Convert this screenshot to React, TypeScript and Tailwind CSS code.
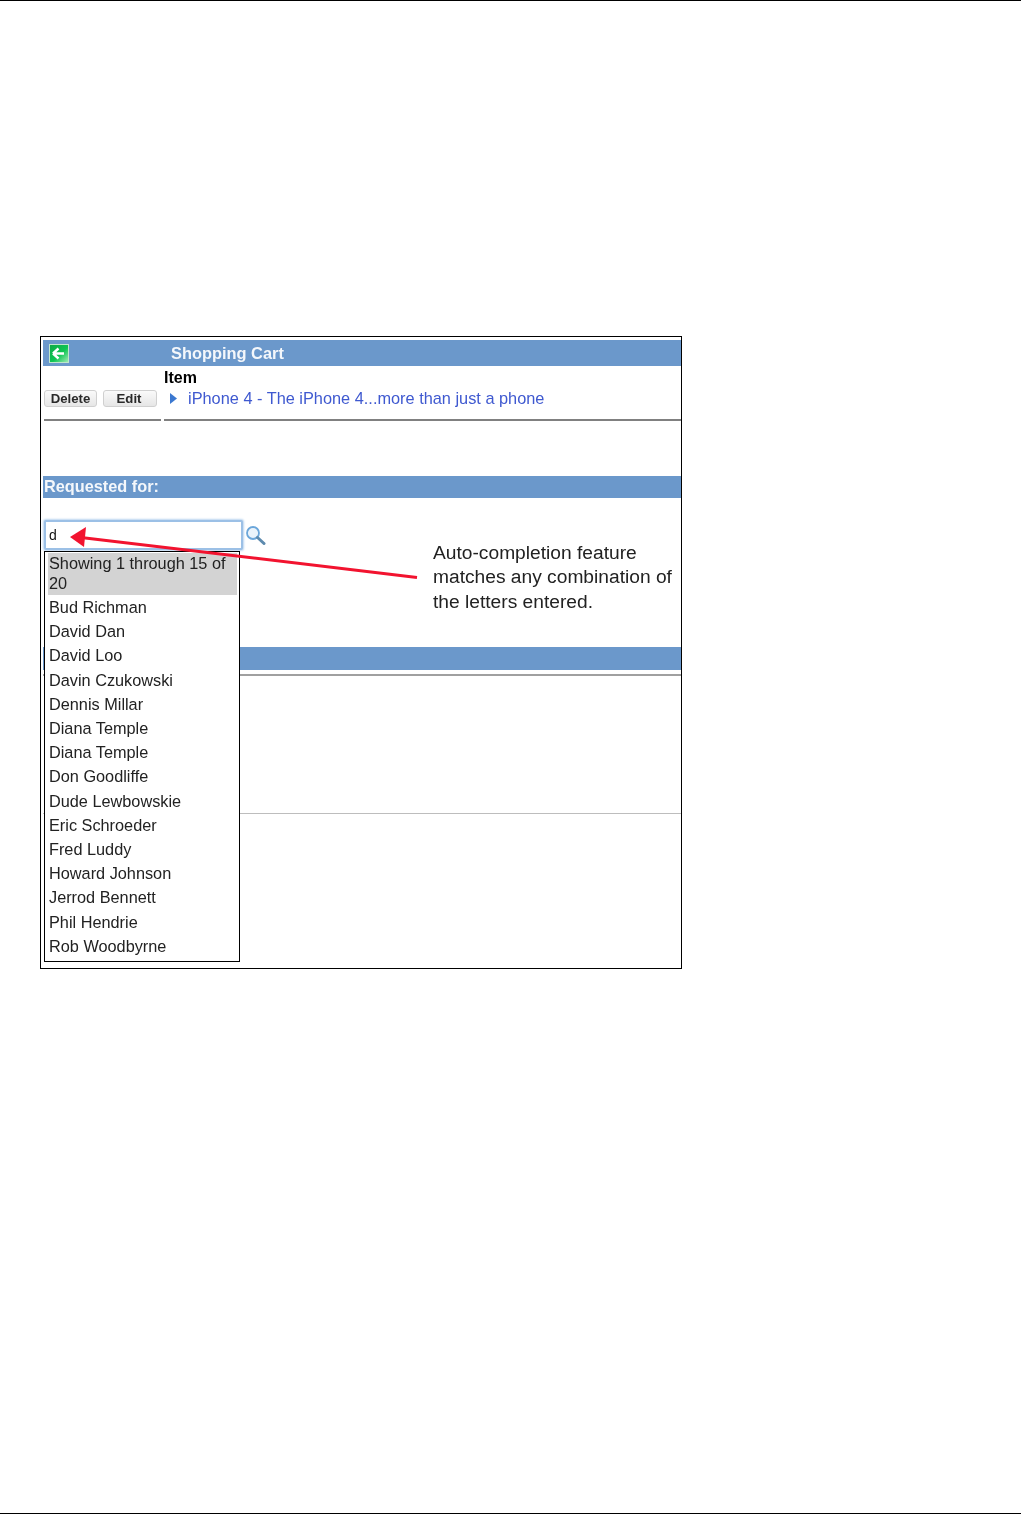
import React from "react";

const names = [
  "Bud Richman",
  "David Dan",
  "David Loo",
  "Davin Czukowski",
  "Dennis Millar",
  "Diana Temple",
  "Diana Temple",
  "Don Goodliffe",
  "Dude Lewbowskie",
  "Eric Schroeder",
  "Fred Luddy",
  "Howard Johnson",
  "Jerrod Bennett",
  "Phil Hendrie",
  "Rob Woodbyrne",
];

function BackIcon() {
  return (
    <svg width="20" height="19" viewBox="0 0 20 19" className="shrink-0">
      <defs>
        <linearGradient id="g" x1="0" y1="0" x2="1" y2="1">
          <stop offset="0" stopColor="#0fa848" />
          <stop offset="0.55" stopColor="#0ec552" />
          <stop offset="1" stopColor="#a6ecb8" />
        </linearGradient>
      </defs>
      <rect x="0.5" y="0.5" width="19" height="18" fill="url(#g)" stroke="#bfe6cb" />
      <path d="M4 9.5 L9.5 4.5 M4 9.5 L9.5 14.5 M4 9.5 H15" stroke="#fff" strokeWidth="2.4" fill="none" />
    </svg>
  );
}

function SearchIcon() {
  return (
    <svg width="21" height="20" viewBox="0 0 21 20">
      <circle cx="8" cy="8" r="6" fill="#eaf3fb" stroke="#6ba6da" strokeWidth="1.8" />
      <path d="M12.5 12.5 L19 18.5" stroke="#5d8aae" strokeWidth="3" strokeLinecap="round" />
    </svg>
  );
}

function Btn({ label, w }: { label: string; w: string }) {
  return (
    <div
      className={`${w} h-[17px] flex items-center justify-center rounded-[3px] border border-[#d0d0d0] bg-gradient-to-b from-[#fafafa] to-[#e6e6e6] text-[13.2px] font-bold text-[#2a2a2a] leading-none`}
    >
      {label}
    </div>
  );
}

export default function App() {
  return (
    <div
      className="h-[1514px] w-[1021px] bg-white flex flex-col border-t border-b border-black overflow-hidden"
      style={{ fontFamily: '"Liberation Sans", Arial, sans-serif' }}
    >
      <div className="relative ml-[40px] mt-[335px] w-[642px] h-[633px] border border-black pt-[3px] pl-[2px]">
        <div className="blur-[0.5px]">
          <div className="h-[26px] w-[638px] bg-[#6b98cb] flex items-center pl-[6px]">
            <BackIcon />
            <div className="ml-[102px] text-[16.4px] font-bold text-[#f4f7fb] leading-none">Shopping Cart</div>
          </div>

          <div className="flex h-[56px] w-[638px]">
            <div className="w-[117px] ml-[1px] mr-[3px] border-b-2 border-[#808080] h-[55px] flex items-start gap-[6px] pt-[24px]">
              <Btn label="Delete" w="w-[53px]" />
              <Btn label="Edit" w="w-[54px] pr-[2px]" />
            </div>
            <div className="flex-1 border-b-2 border-[#808080] h-[55px] pt-[3px]">
              <div className="text-[16px] font-bold text-black leading-[18px]">Item</div>
              <div className="flex items-center mt-[1px] ml-[6px] h-[20px]">
                <svg width="7" height="11" viewBox="0 0 7 11">
                  <path d="M0 0 L7 5.5 L0 11 Z" fill="#3b78d0" />
                </svg>
                <span className="ml-[11px] text-[16.33px] text-[#3f59d0] leading-none">
                  iPhone 4 - The iPhone 4...more than just a phone
                </span>
              </div>
            </div>
          </div>

          <div className="mt-[54px] h-[22px] w-[638px] bg-[#6b98cb] flex items-start pl-[1px] pt-[2px]">
            <span className="text-[16.3px] font-bold text-[#f4f7fb] leading-none">Requested for:</span>
          </div>

          <div className="mt-[22px] ml-[1px] flex items-center h-[30px]">
            <div className="w-[199px] h-[30px] rounded-[2px] border-2 border-[#9cc0e6] shadow-[0_0_2px_1px_#bcd6f0] bg-white flex items-center pl-[3px] text-[14px] text-[#111]">
              d
            </div>
            <div className="ml-[2px] mt-[-1px]">
              <SearchIcon />
            </div>
          </div>

          <div className="mt-[97px] h-[23px] w-[638px] bg-[#6b98cb]" />
          <div className="mt-[4px] h-[2px] w-[638px] bg-[#a0a0a0]" />
          <div className="mt-[137px] h-[1px] w-[638px] bg-[#bdbdbd]" />
        </div>

        {/* Auto-complete dropdown over the form */}
        <div className="absolute left-[3px] top-[214px] w-[196px] h-[411px] z-10 border border-black bg-white pl-[3px] pr-[2px] pt-[1px] text-[16.3px] text-[#222] leading-[24.2px]">
          <div className="blur-[0.5px]">
            <div className="bg-[#d3d3d3] h-[42px] pl-[1px]">
              <div className="h-[20px] whitespace-nowrap leading-[21px]">Showing 1 through 15 of</div>
              <div className="h-[22px] leading-[20px]">20</div>
            </div>
            <div>
              {names.map((n, i) => (
                <div key={i} className="pl-[1px] whitespace-nowrap">
                  {n}
                </div>
              ))}
            </div>
          </div>
        </div>

        {/* Callout arrow */}
        <svg
          className="absolute left-[20px] top-[185px] z-20 blur-[0.5px]"
          width="380"
          height="65"
          viewBox="0 0 380 65"
        >
          <path d="M20 15.5 L356 55.5" stroke="#f2132f" strokeWidth="3" />
          <path d="M9 15 L25 5 L23 25 Z" fill="#f2132f" />
        </svg>

        {/* Callout text */}
        <div className="absolute left-[392px] top-[204px] z-20 text-[19.2px] text-[#222] leading-[24.3px] whitespace-nowrap blur-[0.5px]">
          <div>Auto-completion feature</div>
          <div>matches any combination of</div>
          <div>the letters entered.</div>
        </div>
      </div>
    </div>
  );
}
